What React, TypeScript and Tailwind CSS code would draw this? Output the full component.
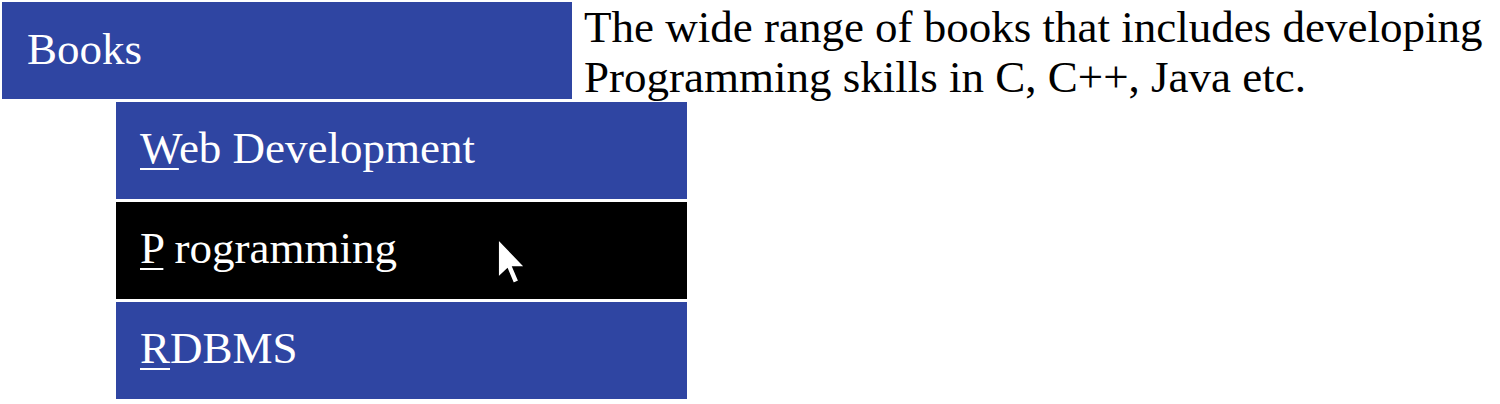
import React from "react";

const serif = { fontFamily: '"Liberation Serif", "Times New Roman", serif' };

function Cursor() {
  return (
    <svg
      className="absolute left-[381px] top-[36px]"
      width="30"
      height="48"
      viewBox="0 0 12.5 20"
    >
      <path
        d="M0.5 0.5 L0.5 16.5 L4.3 12.9 L6.8 18.9 L9.1 17.9 L6.6 12.1 L11.6 12.1 Z"
        fill="#ffffff"
        stroke="#000000"
        strokeWidth="0.6"
        strokeLinejoin="miter"
      />
    </svg>
  );
}

function Item({
  first,
  rest,
  active,
}: {
  first: string;
  rest: string;
  active?: boolean;
}) {
  return (
    <div
      className={`relative h-[97px] w-[571px] pl-[24px] pt-[21px] text-[45px] leading-[50px] text-white ${
        active ? "bg-black" : "bg-[#2f45a2]"
      }`}
    >
      <span className="underline decoration-2 underline-offset-[5px]">{first}</span>
      {rest}
      {active && <Cursor />}
    </div>
  );
}

export default function App() {
  return (
    <div className="flex min-h-[404px] items-start bg-white" style={serif}>
      <div className="relative ml-[2px] mt-[2px] w-[570px] shrink-0">
        <div className="h-[97px] w-[570px] bg-[#2f45a2] pl-[25px] pt-[22px] text-[45px] leading-[50px] text-white">
          Books
        </div>
        <div className="absolute left-[114px] top-[100px] flex flex-col gap-[3px]">
          <Item first="W" rest="eb Development" />
          <Item first="P" rest=" rogramming" active />
          <Item first="R" rest="DBMS" />
        </div>
      </div>
      <p className="ml-[12px] mt-[2px] text-[45px] leading-[50px] text-black">
        The wide range of books that includes developing Programming skills in C, C++, Java etc.
      </p>
    </div>
  );
}
